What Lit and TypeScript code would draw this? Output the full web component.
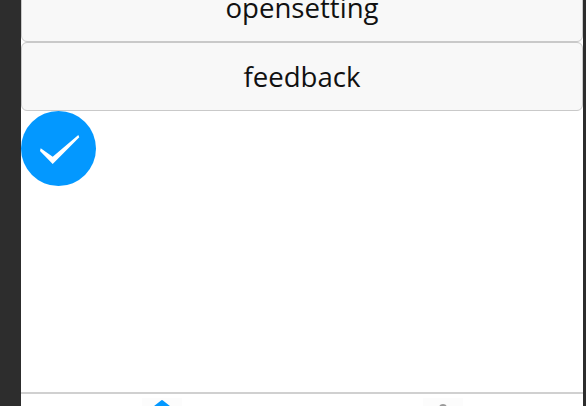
import { LitElement, html, css } from "lit";
import { customElement } from "lit/decorators.js";

@customElement("app-root")
export class AppRoot extends LitElement {
  static styles = css`
    :host {
      display: block;
      height: 406px;
      overflow: hidden;
      font-family: "Open Sans", "Noto Sans", sans-serif;
    }
    .frame {
      display: flex;
      height: 406px;
      box-sizing: border-box;
      padding: 0 3px 0 21px;
      background: #2d2d2d;
    }
    .page {
      flex: 1;
      min-width: 0;
      display: flex;
      flex-direction: column;
      background: #fff;
    }
    .content {
      height: 392px;
      flex: none;
      overflow: hidden;
    }
    .list {
      display: flex;
      flex-direction: column;
      margin-top: -27px;
    }
    .btn {
      display: flex;
      align-items: center;
      justify-content: center;
      height: 69px;
      box-sizing: border-box;
      border: 1px solid #c9c9c9;
      border-radius: 6px;
      background: #f8f8f8;
      color: #111;
      font-size: 27.6px;
      line-height: 1;
    }
    .success {
      display: block;
      width: 75px;
      height: 75px;
    }
    .tabbar {
      flex: none;
      height: 14px;
      box-sizing: border-box;
      border-top: 2px solid #d0d0d0;
      overflow: hidden;
      display: grid;
      grid-template-columns: 1fr 1fr;
      padding-top: 4px;
    }
    .tab {
      display: flex;
      justify-content: center;
    }
    .icon {
      display: block;
      width: 40px;
      height: 40px;
      background: #fcfcfc;
    }
    .roof {
      fill: #0398ff;
      stroke: #0398ff;
      stroke-width: 2;
      stroke-linejoin: round;
    }
    .head {
      fill: #999;
    }
  `;

  render() {
    return html`
      <div class="frame">
        <div class="page">
          <div class="content">
            <div class="list">
              <div class="btn">opensetting</div>
              <div class="btn">feedback</div>
            </div>
            <svg class="success" viewBox="0 0 75 75">
              <circle cx="37.5" cy="37.5" r="37.5" fill="#0398ff"></circle>
              <polygon
                points="19.7,37.3 31.7,45.7 57.3,24 58.3,26.3 31.7,53 19,40"
                fill="#fff"
              ></polygon>
            </svg>
          </div>
          <div class="tabbar">
            <div class="tab">
              <svg class="icon" viewBox="0 0 40 40">
                <polygon class="roof" points="20,3 44,22 -4,22"></polygon>
              </svg>
            </div>
            <div class="tab">
              <svg class="icon" viewBox="0 0 40 40">
                <circle class="head" cx="20" cy="10" r="4"></circle>
              </svg>
            </div>
          </div>
        </div>
      </div>
    `;
  }
}
